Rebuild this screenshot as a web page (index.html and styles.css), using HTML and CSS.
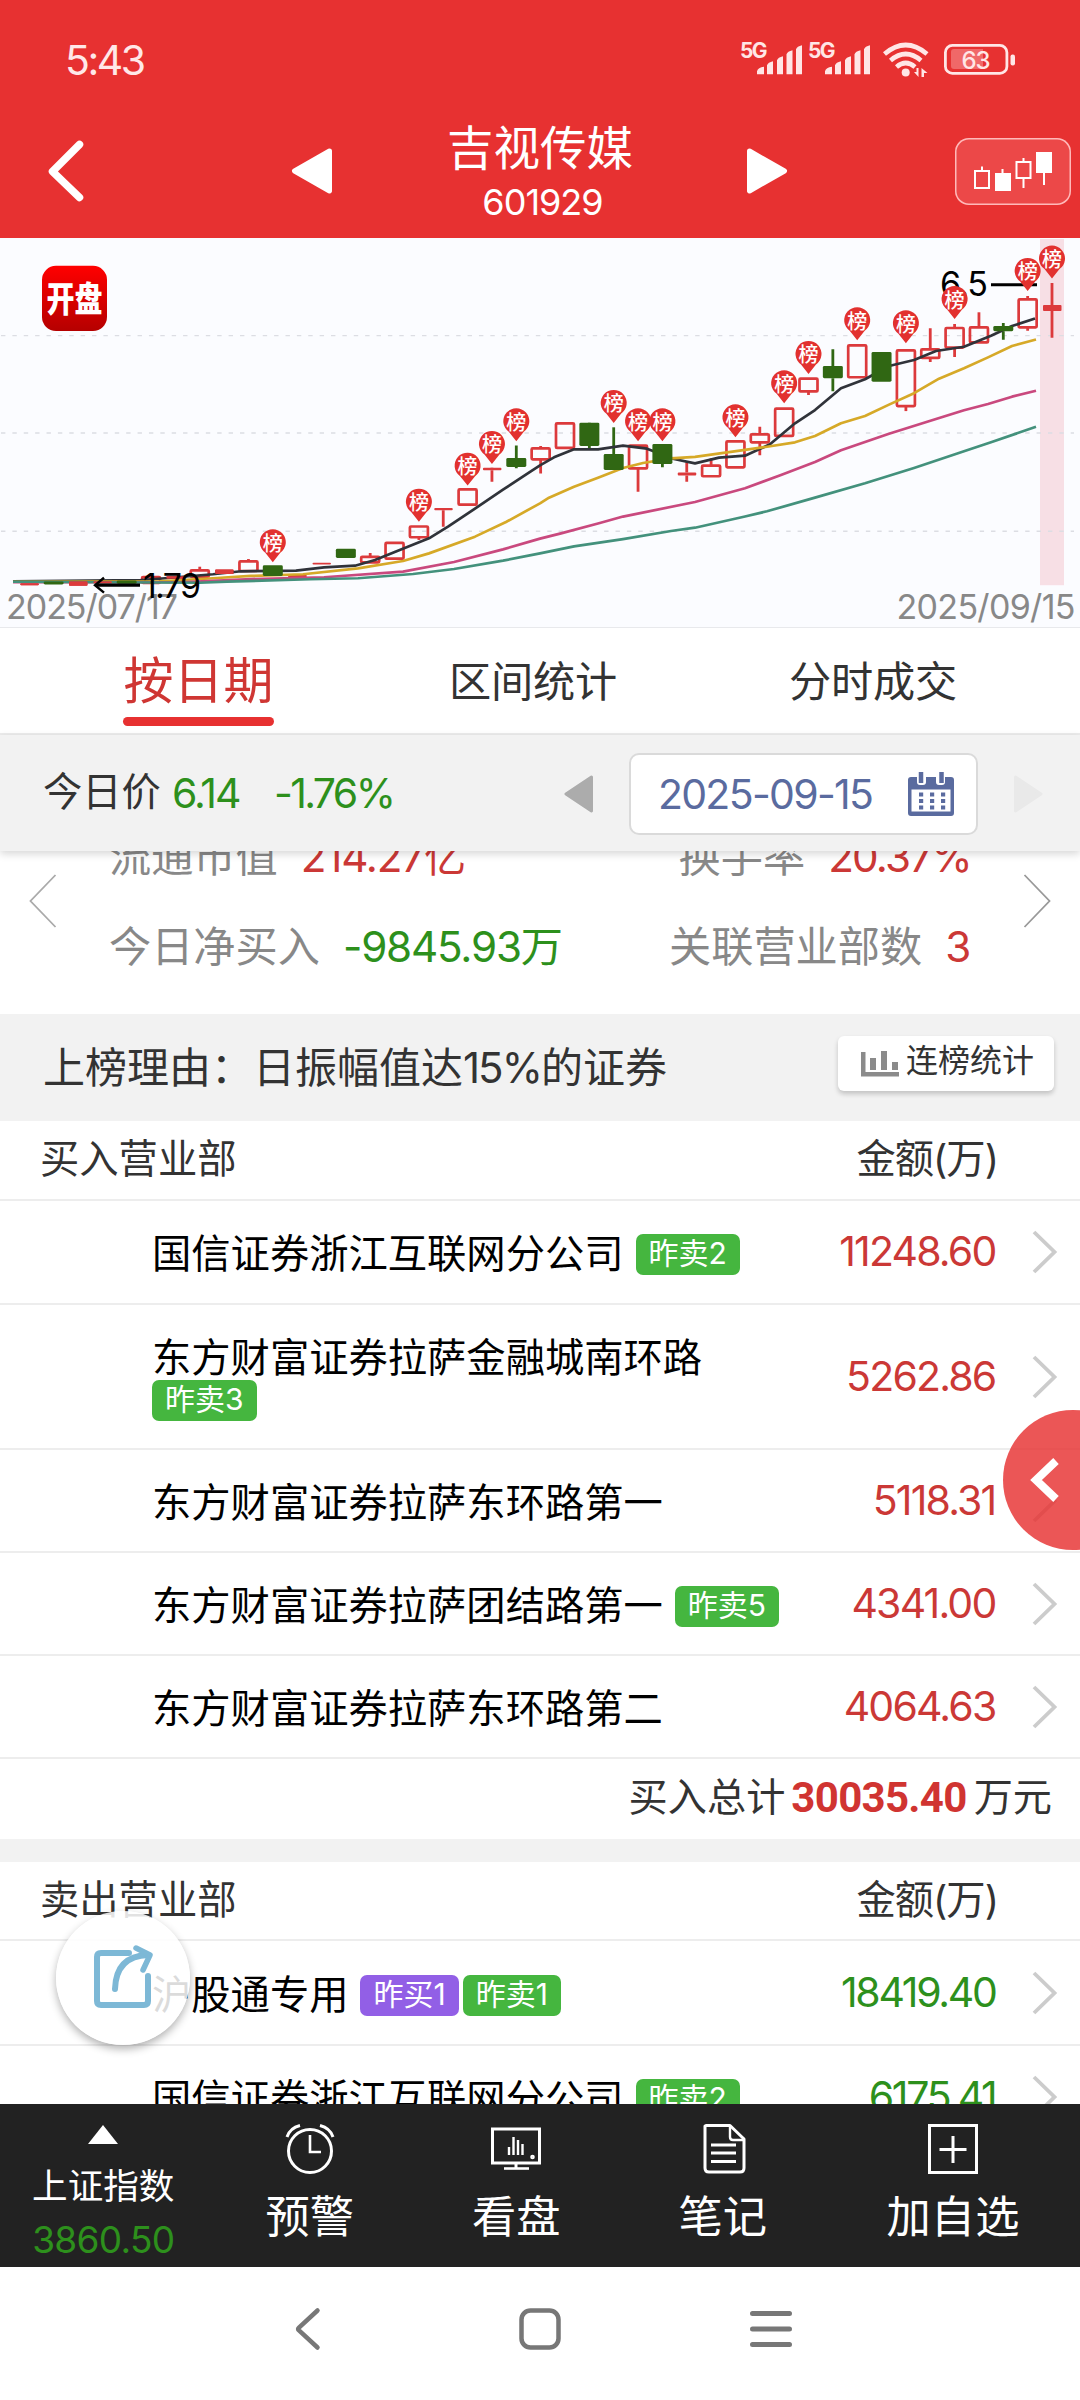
FILE: index.html
```html
<!DOCTYPE html>
<html lang="zh-CN">
<head>
<meta charset="utf-8">
<title>吉视传媒 601929</title>
<link rel="stylesheet" href="styles.css">
</head>
<body>
<div class="screen">
  <header class="header">
    <div class="status">
      <span class="clock">5:43</span>
      <svg class="status-icons" width="280" height="50" viewBox="740 35 280 50">
        <g class="net"><text x="740" y="57.5" textLength="27.5">5G</text><text x="808" y="57.5" textLength="27.5">5G</text></g>
        <g fill="#ffe6e6">
          <path d="M757 74.300v-3q1-4 7-4.500v7.500zM767 74.300v-9q1-3 6-4v13zM777 74.300v-14q1-3 6-4v18zM786.500 74.300v-20q1-3 6-4v24zM796 74.300v-25q1-3 6-4v29z"/>
          <path transform="translate(68)" d="M757 74.300v-3q1-4 7-4.500v7.500zM767 74.300v-9q1-3 6-4v13zM777 74.300v-14q1-3 6-4v18zM786.500 74.300v-20q1-3 6-4v24zM796 74.300v-25q1-3 6-4v29z"/>
          <circle cx="905.700" cy="72.500" r="4"/>
          <path d="M914 72h2.500v-4h2v9zM921.500 77v-9l6 5h-3.500v4z"/>
          <rect x="1010.500" y="54.500" width="4.500" height="11" rx="2"/>
        </g>
        <g fill="none" stroke="#ffe6e6" stroke-width="4.600">
          <path d="M884.500 54Q905.700 36 927 54M890.500 60.500Q905.700 47.500 921 60.500M896.500 67Q905.700 59 915 67"/>
          <rect x="945.400" y="45.400" width="61.500" height="28" rx="7" stroke-width="2.800"/>
        </g>
        <path fill="#f06868" d="M954 49h29v20h-29q-3 0-3-3v-14q0-3 3-3z"/>
        <text class="battery" x="961.500" y="69">63</text>
      </svg>
    </div>
    <div class="titlebar">
      <svg class="back" width="48" height="68" viewBox="0 0 48 68"><path d="M39.500 7.500L12.500 34.500L39.500 60.500" fill="none" stroke="#fff" stroke-width="7.500" stroke-linecap="round" stroke-linejoin="round"/></svg>
      <svg class="prev" width="44" height="50" viewBox="0 0 44 50"><path d="M39.500 5L4.500 25L39.500 45z" fill="#fff" stroke="#fff" stroke-width="5" stroke-linejoin="round"/></svg>
      <div class="title"><div class="name">吉视传媒</div><div class="code">601929</div></div>
      <svg class="next" width="44" height="50" viewBox="0 0 44 50"><path d="M4.500 5L39.500 25L4.500 45z" fill="#fff" stroke="#fff" stroke-width="5" stroke-linejoin="round"/></svg>
      <div class="kline-btn">
        <svg width="116" height="67" viewBox="0 0 116 67"><g stroke="#fff" stroke-width="2" fill="none"><path d="M27 28.500V33M47.500 31V36M68.500 20v4M68.500 40v10M89 34v13"/><path d="M20 33h14v17h-14zM61.500 24h14v16h-14z"/></g><path fill="#fff" d="M40 35h16v18h-16zM81 14h16v21h-16z"/></svg>
      </div>
    </div>
  </header>

  <section class="chart"><svg id="chart" width="1080" height="390" viewBox="0 238.04 1080 391.96" preserveAspectRatio="none"></svg></section>

  <nav class="tabs">
    <div class="tab tab-a active"><span>按日期</span></div>
    <div class="tab tab-b"><span>区间统计</span></div>
    <div class="tab tab-c"><span>分时成交</span></div>
  </nav>

  <div class="pricebar">
    <span class="pb-label">今日价</span><span class="pb-price">6.14</span><span class="pb-change">-1.76%</span>
    <svg class="pb-prev" width="31" height="38" viewBox="0 0 31 38"><path d="M28.500 2L3 19L28.500 36z" fill="#acacac" stroke="#acacac" stroke-width="3" stroke-linejoin="round"/></svg>
    <div class="datebox"><span>2025-09-15</span>
      <svg width="48" height="44" viewBox="0 0 48 44"><path fill="#5a6b9f" d="M4 5h6v5q0 3 3 3h3q3 0 3-3v-5h10v5q0 3 3 3h3q3 0 3-3v-5h6q3 0 3 3v33q0 3-3 3h-40q-3 0-3-3v-33q0-3 3-3z"/><rect x="4.500" y="17.500" width="39" height="22" fill="#fff"/><path d="M14 0v11M34.500 0v11" stroke="#5a6b9f" stroke-width="4.500"/><path d="M12 22.500h27M12 29h27M12 35.500h27" stroke="#5a6b9f" stroke-width="4.200" stroke-dasharray="4.200 6.800"/></svg>
    </div>
    <svg class="pb-next" width="31" height="38" viewBox="0 0 31 38"><path d="M2.500 2L28 19L2.500 36z" fill="#e9e9e9" stroke="#e9e9e9" stroke-width="3" stroke-linejoin="round"/></svg>
  </div>

  <section class="info">
    <svg class="info-arrow" width="28" height="54" viewBox="0 0 28 54"><path d="M26.500 1L1.500 27L26.500 53" fill="none" stroke="#aaa" stroke-width="1.800"/></svg>
    <div class="info-grid">
      <div class="info-row"><span class="label">流通市值</span><b class="red v1">214.27亿</b><span class="label push">换手率</span><b class="red v2">20.37%</b></div>
      <div class="info-row"><span class="label">今日净买入</span><b class="green v3">-9845.93万</b><span class="label push">关联营业部数</span><b class="red v4">3</b></div>
    </div>
    <svg class="info-arrow" width="28" height="54" viewBox="0 0 28 54"><path d="M1.500 1L26.500 27L1.500 53" fill="none" stroke="#999" stroke-width="1.800"/></svg>
  </section>

  <div class="reason">
    <span class="reason-text">上榜理由：日振幅值达<i>15%</i>的证券</span>
    <div class="stat-btn"><svg width="38" height="26" viewBox="0 0 38 26"><path fill="#8b8b8b" d="M0 1h4.500v20h33.500v4.500h-38zM9 7h6v12h-6zM20 0h6v19h-6zM31 11h6v8h-6z"/></svg><span>连榜统计</span></div>
  </div>

  <section class="list">
    <div class="row head"><span>买入营业部</span><span class="unit">金额(万)</span></div>
    <div class="row buy1"><div class="branch">国信证券浙江互联网分公司<em class="tag">昨卖2</em></div><b class="amt red">11248.60</b><svg class="go"><use href="#chev"/></svg></div>
    <div class="row tall"><div class="branch">东方财富证券拉萨金融城南环路<br><em class="tag first">昨卖3</em></div><b class="amt red">5262.86</b><svg class="go"><use href="#chev"/></svg></div>
    <div class="row"><div class="branch">东方财富证券拉萨东环路第一</div><b class="amt red">5118.31</b><svg class="go"><use href="#chev"/></svg></div>
    <div class="row"><div class="branch">东方财富证券拉萨团结路第一<em class="tag">昨卖5</em></div><b class="amt red">4341.00</b><svg class="go"><use href="#chev"/></svg></div>
    <div class="row"><div class="branch">东方财富证券拉萨东环路第二</div><b class="amt red">4064.63</b><svg class="go"><use href="#chev"/></svg></div>
    <div class="total"><span>买入总计</span><strong>30035.40</strong><span>万元</span></div>
    <div class="gap"></div>
    <div class="row head sell"><span>卖出营业部</span><span class="unit">金额(万)</span></div>
    <div class="row sell1"><div class="branch">沪股通专用<em class="tag purple">昨买1</em><em class="tag next-tag">昨卖1</em></div><b class="amt green tight">18419.40</b><svg class="go"><use href="#chev"/></svg></div>
    <div class="row"><div class="branch">国信证券浙江互联网分公司<em class="tag">昨卖2</em></div><b class="amt green tight">6175.41</b><svg class="go"><use href="#chev"/></svg></div>
  </section>

  <footer class="toolbar">
    <div class="tool index"><svg width="30" height="19" viewBox="0 0 30 19"><path fill="#fff" d="M15 0l15 19h-30z"/></svg><span class="idx-name">上证指数</span><span class="idx-val">3860.50</span></div>
    <div class="tool"><svg width="52" height="52" viewBox="0 0 52 52" fill="none" stroke="#fff" stroke-width="3"><circle cx="26" cy="28" r="21.500"/><path d="M26 12v17h11" stroke-width="2.600"/><path d="M3 14Q6 5 16 2.500M49 14Q46 5 36 2.500"/></svg><span>预警</span></div>
    <div class="tool"><svg width="52" height="52" viewBox="0 0 52 52" fill="none" stroke="#fff" stroke-width="3"><rect x="2.500" y="6" width="47" height="34"/><path d="M14 45.500h25" stroke-width="2.600"/><path d="M26 40v5"/><path d="M19 24v8M23.500 14v18M28 17v15M32.500 21v11" stroke-width="2.400"/><circle cx="42.500" cy="34" r="1.300" stroke-width="2"/></svg><span>看盘</span></div>
    <div class="tool"><svg width="52" height="52" viewBox="0 0 52 52" fill="none" stroke="#fff" stroke-width="3" stroke-linejoin="round"><path d="M9 2.500h24L47 16v29q0 4-4 4h-31q-4 0-4-4v-42z"/><path d="M33 3v11q0 3 3 3h11" stroke-width="2.400"/><path d="M14 22h25M14 30h25M14 38.500h25" stroke-width="3"/></svg><span>笔记</span></div>
    <div class="tool add"><svg width="52" height="52" viewBox="0 0 52 52" fill="none" stroke="#fff" stroke-width="3"><path d="M2.500 2.500h47v47h-47zM26 13v27M12.500 26.500h27"/></svg><span>加自选</span></div>
  </footer>

  <div class="sysnav">
    <svg width="42" height="44" viewBox="0 0 42 44"><path d="M29.500 3.500L11 20.500q-1.500 1.500 0 3L29.500 40.500" fill="none" stroke="#777" stroke-width="4.500" stroke-linecap="round"/></svg>
    <svg width="42" height="44" viewBox="0 0 42 44"><rect x="2.500" y="3.500" width="37" height="37" rx="9" fill="none" stroke="#777" stroke-width="4.500"/></svg>
    <svg width="42" height="44" viewBox="0 0 42 44"><path d="M2.500 6.500h37M2.500 22h37M2.500 37.500h37" fill="none" stroke="#777" stroke-width="5" stroke-linecap="round"/></svg>
  </div>

  <div class="side-handle"><svg width="32" height="46" viewBox="0 0 32 46"><path d="M27 4L7 23L27 42" fill="none" stroke="#fff" stroke-width="8"/></svg></div>
  <div class="share"><svg width="66" height="66" viewBox="0 0 66 66" fill="none" stroke="#7db8d6" stroke-width="6" stroke-linejoin="round" stroke-linecap="round"><path d="M38 9H10q-4 0-4 4v44q0 4 4 4h43q4 0 4-4V32"/><path d="M24 45Q25 12 57 11"/><path d="M45 4l14 7L52 26" stroke-width="5.500"/></svg></div>
</div>
<svg width="0" height="0" class="defs"><symbol id="chev" viewBox="0 0 28 46"><path d="M3 3L23.500 23L3 43" fill="none" stroke="#ccc" stroke-width="3.800"/></symbol></svg>
<script src="chart.js"></script>
</body>
</html>
```
FILE: styles.css
```css
* { box-sizing: border-box; }
body { margin: 0; background: #fff; font-family: Inter, "Noto Sans CJK SC", sans-serif; color: #333; }
svg { display: block; flex: none; }
b, em, i { font-weight: 400; font-style: normal; }
.defs { position: absolute; }
.screen { position: relative; width: 1080px; height: 2400px; overflow: hidden; display: flex; flex-direction: column; }
.red { color: #cb3836; }
.green { color: #2d901c; }

.header { height: 238px; flex: none; background: #e73131; color: #fff; }
.status { height: 105px; padding: 35px 60px 0 65px; display: flex; justify-content: space-between; }
.clock { font-size: 41px; line-height: 50px; letter-spacing: -2.500px; color: #ffe8e8; }
.net { font-size: 21px; font-weight: 700; fill: #ffe6e6; }
.battery { font-size: 24px; font-weight: 500; fill: #ffe6e6; letter-spacing: -1px; }
.titlebar { display: flex; align-items: center; height: 132px; padding: 0 9px 0 40px; }
.prev { margin-left: 202px; }
.title { width: 300px; margin: 0 55px 0 56px; text-align: center; }
.name { font-size: 46.500px; line-height: 58px; padding-top: 4px; }
.code { font-size: 36px; line-height: 49px; letter-spacing: -1px; padding: 1px 0 0 5px; }
.kline-btn { margin-left: auto; width: 116px; height: 67px; background: #ec4848; border-radius: 14px; box-shadow: inset 0 0 0 1.500px #ffb9b9; }

.chart { height: 390px; flex: none; background: #fbfcff; border-bottom: 1px solid #e8e9ec; }
.axis { font-size: 34px; fill: #888; }
.mark { font-size: 34px; fill: #000; }
.pin { font-size: 20px; font-weight: 500; fill: #fff; text-anchor: middle; }
.logo { font-size: 28px; font-weight: 900; fill: #fff; text-anchor: middle; }

.tabs { height: 107px; flex: none; display: flex; border-bottom: 2px solid #ececec; font-size: 42.200px; line-height: 107px; letter-spacing: -0.200px; }
.tab { text-align: center; }
.tab-a { width: 274px; padding-left: 123px; font-size: 50px; line-height: 106px; letter-spacing: 0; color: #cf3633; white-space: nowrap; }
.tab-a span { display: block; position: relative; height: 98px; }
.active span::after { content: ""; position: absolute; left: 0; right: 0; bottom: 0; height: 9px; border-radius: 5px; background: #e73131; }
.tab-b { margin-left: 175px; }
.tab-c { margin-left: 172px; }

.pricebar { height: 116px; flex: none; position: relative; z-index: 2; display: flex; align-items: center; padding-left: 43px; background: #f2f2f2; box-shadow: 0 3px 8px rgba(0,0,0,.16); }
.pb-label { font-size: 39.300px; line-height: 50px; padding-bottom: 3px; }
.pb-price, .pb-change { font-size: 41px; letter-spacing: -2px; color: #2d901c; }
.pb-price { width: 102px; margin-left: 11px; }
.pb-change { width: 289px; letter-spacing: -2.600px; }
.datebox { width: 349px; height: 82px; margin: 1px 0 0 35px; padding: 0 21px 0 27px; border: 2px solid #dadada; border-radius: 10px; background: #fff; display: flex; align-items: center; justify-content: space-between; font-size: 41px; letter-spacing: -1.700px; color: #5a6b9f; }
.pb-prev { margin-top: 2px; }
.pb-next { margin: 2px 0 0 35px; }

.info { height: 163px; flex: none; display: flex; padding: 0 29px; justify-content: space-between; }
.info-arrow { margin-top: 23px; }
.info-grid { width: 862px; margin: -22px auto 0 52px; }
.info-row { height: 90px; display: flex; align-items: baseline; font-size: 42.200px; line-height: 56px; white-space: nowrap; }
.info-row b { letter-spacing: -1.200px; margin-left: 23px; }
.info-row .v2 { letter-spacing: -1.800px; }
.info-row .v4 { margin-right: 1px; }
.label { color: #888; }
.info-row .push { margin-left: auto; }

.reason { height: 107px; flex: none; background: #f2f2f2; display: flex; align-items: flex-start; justify-content: space-between; padding: 22px 26px 0 43px; }
.reason-text { font-size: 42px; line-height: 64px; }
.reason-text i { letter-spacing: -2px; }
.stat-btn { width: 216px; height: 55px; display: flex; align-items: center; padding-left: 23px; gap: 7px; font-size: 32px; background: #fff; border-radius: 6px; box-shadow: 0 3px 5px rgba(0,0,0,.2); }
.stat-btn span { line-height: 44px; padding-bottom: 5px; }

.list { height: 983px; flex: none; overflow: hidden; }
.row { height: 103px; border-bottom: 2px solid #ededed; display: flex; align-items: center; font-size: 39.300px; padding: 0 21px 0 152px; }
.row.buy1 { height: 104px; }
.row.head { height: 80px; justify-content: space-between; padding: 0 82px 9px 40px; }
.row.head.sell { height: 79px; }
.row.tall { height: 145px; }
.row.sell1 { height: 105px; }
.unit { letter-spacing: -1px; }
.branch { color: #000; line-height: 46px; flex: 1; white-space: nowrap; padding-top: 4px; }
.tall .branch { line-height: 42px; }
.tag { display: inline-block; vertical-align: 4px; margin-left: 12px; padding: 0 13px; height: 41px; border-radius: 7px; background: #45b63f; color: #fff; font-size: 30px; line-height: 39px; letter-spacing: 0; }
.first { margin-left: 0; }
.purple { background: #925fe6; }
.next-tag { margin-left: 4px; }
.amt { font-size: 41px; line-height: 50px; padding-bottom: 2px; letter-spacing: -1.800px; }
.amt.tight { letter-spacing: -2.300px; }
.go { width: 28px; height: 46px; margin-left: 35.500px; }
.total { height: 80px; display: flex; justify-content: flex-end; align-items: center; padding: 0 28px 0 0; font-size: 39.200px; }
.total span { line-height: 50px; padding-bottom: 4px; }
.total strong { font-family: Roboto, Inter, sans-serif; font-size: 42px; line-height: 50px; font-weight: 700; letter-spacing: -.700px; color: #d03431; padding-bottom: 2px; margin: 0 7px 0 6px; }
.gap { height: 23px; background: #f2f2f2; }

.toolbar { height: 163px; flex: none; background: #222; color: #fff; display: flex; }
.tool { width: 206.500px; display: flex; flex-direction: column; align-items: center; padding-top: 19px; font-size: 44.300px; line-height: 60px; }
.tool span { margin-top: 12px; }
.add { width: 254px; }
.index { padding-top: 21px; }
.tool .idx-name { font-size: 35.600px; line-height: 48px; margin-top: 19px; }
.tool .idx-val { font-size: 37px; line-height: 40px; color: #2d901c; letter-spacing: -.700px; margin-top: 9px; }

.sysnav { height: 133px; flex: none; display: flex; justify-content: center; gap: 189px; padding-top: 40px; }

.side-handle { position: absolute; z-index: 3; left: 1003px; top: 1410px; width: 140px; height: 140px; border-radius: 70px; background: rgba(231,49,49,.82); padding: 47px 0 0 26px; }
.share { position: absolute; z-index: 3; left: 56px; top: 1911px; width: 134px; height: 134px; border-radius: 50%; background: rgba(255,255,255,.86); box-shadow: 0 4px 9px rgba(0,0,0,.3); padding: 33px 0 0 35px; }
```
FILE: chart.js
```js
const X = i => 29.3 + 24.35 * i;

// [kind, body top, body bottom, high, low] — r: rising, g: falling, s: flat
const candles = [
  ['s', 585, 587], ['g', 583.3, 586.3], ['s', 583, 587.5], ['s', 583, 585], ['g', 582.3, 585.5],
  ['r', 578.9, 584.6], ['s', 578, 580.5], ['r', 572, 578.5, 568.4], ['s', 571.2, 575.7], ['r', 563, 572.7, 560.7],
  ['g', 567, 577.7], ['s', 576.5, 579.5], ['s', 564.3, 566.3], ['g', 550.3, 559.6], ['r', 558.5, 564, 554.6],
  ['r', 544.5, 560.3], ['r', 528, 538.8, 528, 541.5], ['s', 509.3, 511.7, 510, 528.2], ['r', 490.7, 506], ['s', 469, 471.5, 470, 483],
  ['g', 459.1, 468.2, 446.7, 469.5], ['r', 449.5, 460.5, 447, 474.6], ['r', 424.3, 449], ['g', 423.6, 447.1, 424, 451.1], ['g', 455.1, 471.2, 428.3],
  ['r', 446.8, 469.6, 446, 493], ['g', 445.1, 465.2, 445, 468.5], ['s', 473.8, 476.8, 463.5, 483], ['r', 466.8, 477.5, 459.5], ['r', 442.4, 468.5],
  ['r', 435.4, 443.4, 427.7, 456.5], ['r', 409.6, 437], ['r', 379.4, 392.2, 379, 395.8], ['g', 366.7, 379.1, 349.9, 392.1], ['r', 345.9, 378],
  ['g', 352.6, 382.4], ['r', 351, 407, 351, 412], ['r', 350, 358.6, 328.8, 362.7], ['r', 328.5, 348.2, 324.5, 357.6], ['r', 327.9, 343, 312.7],
  ['g', 326.5, 331.8, 323.5, 340.2], ['r', 299.7, 327.8, 296.3, 331.2], ['s', 305.3, 311.3, 283.3, 338.2]
];

// candle index -> tip of its pin
const pins = { 10: 563.3, 16: 522.5, 18: 486.3, 19: 464.5, 20: 441.7, 24: 423.3, 25: 441.7, 26: 441.7, 29: 437.7, 31: 403.5, 32: 374, 34: 340.2, 36: 343.2, 38: 318.8, 41: 290.6, 42: 278.2 };

const averages = [
  ['#30333a', '13,583 141,581.8 165,580 213,576 241,573 296,572.4 324,569 355,567.4 375,561.7 396,553 429,539.9 448,528.2 475,510 503,491 527,475.2 540,466.5 554,458.5 574,450.4 598,450.4 623,446.7 647,449.8 674,460.2 695,464.5 719,458.8 745,456.8 770,445.4 795,424.3 815,411 841,389 865,380 889,366.7 914,360.7 936,351.6 964,347.3 991,336.2 1012,326.5 1035,319'],
  ['#d6a928', '13,583.5 160,583 213,580 251,577.7 303,576 358,570 403,562.7 429,555 475,538.2 506,523.5 540,504.7 549,499 574,488 598,479 623,469.2 643,464.2 671,459.5 695,458 745,451 767,447.8 795,443.4 815,437 841,424.3 865,417 889,405.5 914,394 939,379.4 964,369 988,358 1012,346.6 1036,340'],
  ['#c9497e', '13,584 180,584 251,580.8 324,579 403,573.4 454,563.7 503,551 540,540.2 561,534.9 598,525 623,518 695,503.4 745,489.6 781,476.2 815,463.2 841,451.4 889,434.7 936,420 964,411.2 988,404.9 1012,397.5 1036,391.5'],
  ['#43917c', '13,583.5 200,584.5 227,583.4 310,581 358,580 413,575.7 454,570.7 503,562.3 540,555 574,547.9 623,540.6 671,532.5 695,529.2 745,518 767,512.7 815,499 865,484.6 914,469.2 964,452.4 991,443.4 1036,427.7']
];

let s = '<defs><linearGradient id="lg" x2="0" y2="1"><stop stop-color="#f00"/><stop offset="1" stop-color="#b50000"/></linearGradient></defs>';
s += '<rect x="1040" y="239" width="24" height="348" fill="#f7dfe5"/>';
for (const y of [336.2, 434, 532.8])
  s += `<path d="M1 ${y}H1074" stroke="#dcdde3" stroke-width="1.4" stroke-dasharray="4.400 6.980"/>`;
s += '<text class="axis" x="6" y="621.300" textLength="172">2025/07/17</text><text class="axis" x="896.500" y="621.300" textLength="179">2025/09/15</text>';

candles.forEach(([kind, top, bottom, high = top, low = bottom], i) => {
  const x = X(i), color = kind === 'g' ? '#306713' : '#dc3a3c', h = bottom - top;
  s += `<path d="M${x} ${high}V${top}M${x} ${bottom}V${low}" stroke="${color}" stroke-width="2.800"/>`;
  if (kind === 'r') s += `<rect x="${x - 9}" y="${top}" width="18" height="${h}" rx="1" fill="none" stroke="${color}" stroke-width="2.700"/>`;
  else if (kind === 's') s += `<rect x="${x - 9}" y="${top}" width="18.500" height="${h}" rx="1" fill="${color}"/>`;
});
for (const [color, points] of averages)
  s += `<polyline points="${points}" fill="none" stroke="${color}" stroke-width="2.700" stroke-linejoin="round"/>`;
// the falling bodies stay above the averages
candles.forEach(([kind, top, bottom], i) => {
  if (kind === 'g') s += `<rect x="${X(i) - 10}" y="${top}" width="20" height="${bottom - top}" rx="1.500" fill="#306713"/>`;
});
// the early flat days also show over them
candles.slice(0, 9).forEach(([kind, top, bottom], i) => {
  if (kind === 's') s += `<rect x="${X(i) - 9}" y="${top}" width="18.500" height="${bottom - top}" rx="1" fill="#dc3a3c"/>`;
});

s += '<path d="M96 587H140" stroke="#000" stroke-width="3.200"/><path d="M104 579.500L95 587L104 594.500" fill="none" stroke="#000" stroke-width="2.400"/><text class="mark" x="143" y="599.500" textLength="58">1.79</text>';
s += '<path d="M991 285H1037" stroke="#000" stroke-width="3.200"/><text class="mark" x="940" y="296.800" textLength="48">6.5</text>';

for (const i in pins) {
  const x = X(+i), y = pins[i] + .6;
  s += `<path d="M${x} ${y}L${x - 7.500} ${y - 9.500}A13 13 0 1 1 ${x + 7.500} ${y - 9.500}z" fill="#e2312f"/><text class="pin" x="${x}" y="${y - 11.500}">榜</text>`;
}
s += '<rect x="42" y="266" width="65" height="65.500" rx="14" fill="url(#lg)"/><text class="logo" x="74.500" y="0" transform="translate(0 312.500) scale(1 1.250)" textLength="56">开盘</text>';
document.getElementById('chart').innerHTML = s;
```
